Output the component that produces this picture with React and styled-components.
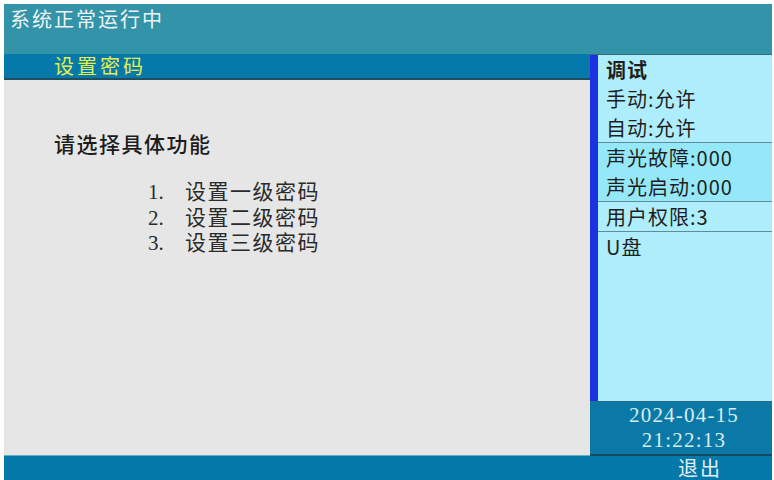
import React from 'react';
import styled, { createGlobalStyle } from 'styled-components';

const GlobalStyle = createGlobalStyle`
  html, body {
    margin: 0;
    padding: 0;
    background: #fff;
  }
  #root {
    padding: 4px 2px 0 4px;
  }
`;

const CJK = `"Noto Sans CJK SC", "Noto Sans", sans-serif`;
const SERIF = `"Liberation Serif", "Noto Sans CJK SC", serif`;

const Screen = styled.div`
  width: 768px;
  height: 476px;
  display: flex;
  flex-direction: column;
  font-family: ${CJK};
  overflow: hidden;
`;

const Header = styled.div`
  height: 50px;
  flex-shrink: 0;
  background: #3393a9;
  color: #eef4f4;
  font-size: 20px;
  line-height: 24px;
  padding: 3px 0 0 6px;
  box-sizing: border-box;
  letter-spacing: 2px;
`;

const Middle = styled.div`
  flex: 1;
  display: flex;
  min-height: 0;
`;

const Work = styled.div`
  width: 586px;
  display: flex;
  flex-direction: column;
`;

const TitleBar = styled.div`
  height: 24px;
  flex-shrink: 0;
  background: #0579a9;
  border-bottom: 2px solid #1e4e60;
  color: #e6ee4c;
  font-size: 20px;
  line-height: 24px;
  padding-left: 50px;
  letter-spacing: 3px;
`;

const Content = styled.div`
  flex: 1;
  background: #e6e6e6;
  border-bottom: 1px solid #5fb0c0;
  padding: 50px 0 0 50px;
  color: #1c1c1c;
`;

const Prompt = styled.div`
  font-size: 21px;
  font-weight: 500;
  line-height: 26px;
  letter-spacing: 1.5px;
  margin-bottom: 22px;
`;

const Options = styled.div`
  display: flex;
  flex-direction: column;
  padding-left: 94px;
`;

const Option = styled.div`
  display: flex;
  align-items: baseline;
  height: 25.5px;
  line-height: 25px;
  font-size: 21px;
  letter-spacing: 1.5px;
  color: #2a2a2a;
`;

const Num = styled.span`
  width: 37px;
  flex-shrink: 0;
  font-family: ${SERIF};
  font-size: 21px;
  letter-spacing: 0;
`;

const Side = styled.div`
  width: 182px;
  display: flex;
  flex-direction: column;
  border-top: 1px solid #3a6a78;
  box-sizing: border-box;
`;

const Panel = styled.div`
  flex: 1;
  background: #aeeefc;
  border-left: 8px solid #1a32e4;
  display: flex;
  flex-direction: column;
  color: #1e1e1e;
`;

const Group = styled.div`
  padding: 0 0 0 8px;
  background: ${(p) => (p.$hot ? '#94e8f8' : 'transparent')};
  border-bottom: ${(p) => (p.$last ? 'none' : '1.5px solid #5e8c98')};
`;

const Line = styled.div`
  height: ${(p) => p.$h || 28.5}px;
  line-height: ${(p) => p.$h || 28.5}px;
  font-size: 20px;
  font-weight: ${(p) => (p.$bold ? 700 : 400)};
  letter-spacing: 1px;
  white-space: nowrap;
`;

const Clock = styled.div`
  height: 55px;
  flex-shrink: 0;
  background: #0a79a7;
  border-top: 1px solid #2a6a80;
  border-bottom: 2px solid #174a5c;
  box-sizing: border-box;
  display: flex;
  flex-direction: column;
  align-items: center;
  justify-content: center;
  color: #d8ecf0;
  font-family: ${SERIF};
  font-size: 21px;
  line-height: 25px;
  letter-spacing: 1.2px;
  padding-left: 6px;
`;

const Footer = styled.div`
  height: 24px;
  flex-shrink: 0;
  background: #0478a8;
  color: #e4eef2;
  font-family: ${SERIF};
  font-size: 20px;
  line-height: 26px;
  display: flex;
  justify-content: flex-end;
  padding-right: 50px;
  letter-spacing: 2px;
`;

export default function App() {
  return (
    <>
      <GlobalStyle />
      <Screen>
        <Header>系统正常运行中</Header>
        <Middle>
          <Work>
            <TitleBar>设置密码</TitleBar>
            <Content>
              <Prompt>请选择具体功能</Prompt>
              <Options>
                <Option><Num>1.</Num>设置一级密码</Option>
                <Option><Num>2.</Num>设置二级密码</Option>
                <Option><Num>3.</Num>设置三级密码</Option>
              </Options>
            </Content>
          </Work>
          <Side>
            <Panel>
              <Group>
                <Line $bold $h={30}>调试</Line>
                <Line>手动:允许</Line>
                <Line>自动:允许</Line>
              </Group>
              <Group $hot>
                <Line $h={29}>声光故障:000</Line>
                <Line $h={29}>声光启动:000</Line>
              </Group>
              <Group>
                <Line $h={29}>用户权限:3</Line>
              </Group>
              <Group $last>
                <Line $h={30}>U盘</Line>
              </Group>
            </Panel>
            <Clock>
              <span>2024-04-15</span>
              <span>21:22:13</span>
            </Clock>
          </Side>
        </Middle>
        <Footer>退出</Footer>
      </Screen>
    </>
  );
}
